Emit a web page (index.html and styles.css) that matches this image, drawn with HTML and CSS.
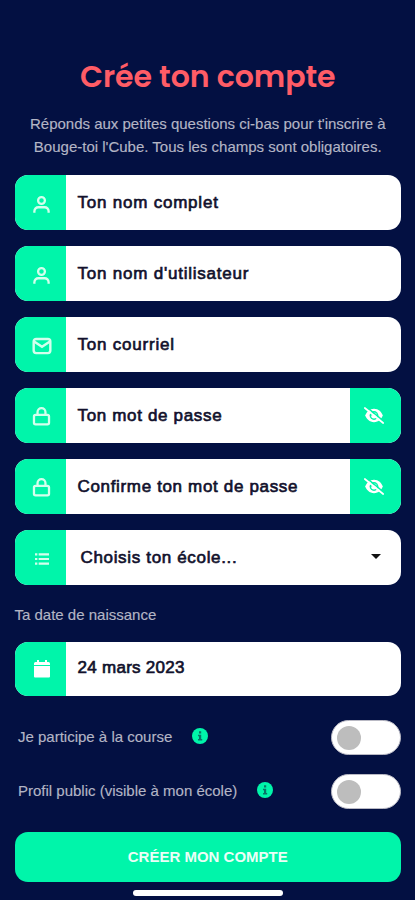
FILE: index.html
```html
<!DOCTYPE html>
<html lang="fr">
<head>
<meta charset="utf-8">
<meta name="viewport" content="width=device-width, initial-scale=1">
<title>Crée ton compte</title>
<link rel="stylesheet" href="styles.css">
</head>
<body>
<svg width="0" height="0" class="defs" aria-hidden="true">
  <symbol id="user" viewBox="0 0 24 24"><circle cx="12" cy="7" r="4.300" /><path d="M3 22.500v-2a5 5 0 0 1 5-5h8a5 5 0 0 1 5 5v2" /></symbol>
  <symbol id="mail" viewBox="0 0 24 24"><rect x="2" y="3.500" width="20" height="17" rx="3" /><path d="M2.500 6.500L12 13l9.500-6.500" /></symbol>
  <symbol id="lock" viewBox="0 0 24 24"><rect x="2.500" y="10.500" width="19" height="12" rx="2" /><path d="M7 10.500V7a5 5 0 0 1 10 0v3.500" /></symbol>
  <symbol id="list" viewBox="0 0 24 24"><path d="M7 5h15.500M7 12h15.500M7 19h15.500M1.500 5h3.500M1.500 12h3.500M1.500 19h3.500" /></symbol>
  <symbol id="eye" viewBox="0 0 24 20"><path class="solid" d="M12 2C6.500 2 3 6 1.500 10c1.500 4 5 8 10.500 8s9-4 10.500-8C21 6 17.500 2 12 2z" /><circle class="hole" cx="12" cy="10" r="5.300" /><path class="solid" d="M12 6.500a3.500 3.500 0 1 1-3.500 3.500c2 .3 3.500-1.300 3.500-3.500z" /><path class="gap" d="M2 -1l23 19" /><path class="slash" d="M1 1l22 18" /></symbol>
  <symbol id="calendar" viewBox="0 0 16 18"><path class="solid" d="M0 5V3.500Q0 2 1.500 2H3V0h2v2h6V0h2v2h1.500Q16 2 16 3.500V5zM0 6h16v10.500q0 1-1 1H1q-1 0-1-1z" /></symbol>
  <symbol id="info" viewBox="0 0 16 16"><circle class="disc" cx="8" cy="8" r="8" /><path class="ink" d="M7 3.300h2.200v2.200H7zM6 6.700h3.200v4.200h1v1.600H6v-1.600h1V8.200H6z" /></symbol>
</svg>
<main class="screen">
  <h1 class="title">Crée ton compte</h1>
  <p class="intro"><span class="line">Réponds aux petites questions ci-bas pour t'inscrire à</span><span class="line">Bouge-toi l'Cube. Tous les champs sont obligatoires.</span></p>
  <form class="form">
    <div class="field"><span class="addon"><svg class="icon"><use href="#user"/></svg></span><span class="value wide">Ton nom complet</span></div>
    <div class="field"><span class="addon"><svg class="icon"><use href="#user"/></svg></span><span class="value wide">Ton nom d'utilisateur</span></div>
    <div class="field"><span class="addon"><svg class="icon mail"><use href="#mail"/></svg></span><span class="value wide">Ton courriel</span></div>
    <div class="field"><span class="addon"><svg class="icon lock"><use href="#lock"/></svg></span><span class="value">Ton mot de passe</span><span class="addon end"><svg class="eye"><use href="#eye"/></svg></span></div>
    <div class="field"><span class="addon"><svg class="icon lock"><use href="#lock"/></svg></span><span class="value">Confirme ton mot de passe</span><span class="addon end"><svg class="eye"><use href="#eye"/></svg></span></div>
    <div class="field"><span class="addon"><svg class="icon list"><use href="#list"/></svg></span><span class="value select">Choisis ton école...<i class="caret"></i></span></div>
  </form>
  <div class="label">Ta date de naissance</div>
  <div class="field date"><span class="addon"><svg class="calendar"><use href="#calendar"/></svg></span><span class="value">24 mars 2023</span></div>
  <div class="option"><span class="option-text">Je participe à la course</span><svg class="info"><use href="#info"/></svg><span class="toggle"><i class="knob"></i></span></div>
  <div class="option"><span class="option-text">Profil public (visible à mon école)</span><svg class="info"><use href="#info"/></svg><span class="toggle"><i class="knob"></i></span></div>
  <button class="submit" type="button">CRÉER MON COMPTE</button>
  <div class="home-bar"></div>
</main>
</body>
</html>
```
FILE: styles.css
```css
* { box-sizing: border-box; }
body { margin: 0; background: #031042; font-family: "Liberation Sans", Arial, sans-serif; }
.defs { display: block; height: 0; }
.screen { height: 900px; padding: 53px 14px 0 14.5px; display: flex; flex-direction: column; overflow: hidden; }
.title { margin: 0; height: 48px; line-height: 48px; text-align: center; color: #ff5c66; font-family: Poppins, Inter, sans-serif; font-weight: 600; font-size: 30px; letter-spacing: -0.05px; white-space: nowrap; }
.intro { margin: 10.5px 0 16.5px; text-align: center; color: #b3b5c5; font-size: 15px; line-height: 23.500px; white-space: nowrap; -webkit-text-stroke: 0.15px currentColor; }
.line { display: block; }
.form { display: flex; flex-direction: column; gap: 16.500px; }
.field { display: flex; flex: none; height: 54.500px; border-radius: 13px; overflow: hidden; background: #fff; }
.addon { width: 51.500px; flex: none; display: flex; align-items: center; justify-content: center; background: #00f5aa; padding: 4px 0 0 3px; }
.addon.end { padding: 0 3px 0 0; }
.icon { width: 19px; height: 19px; fill: none; stroke: #d4ffed; stroke-width: 2.900; }
.mail { height: 20px; width: 20px; }
.lock { height: 20px; margin-top: -2px; }
.list { width: 18px; height: 16px; stroke-width: 3.300; }
.eye { width: 20px; height: 17px; }
.solid { fill: #fff; }
.hole { fill: #00f5aa; }
.gap { stroke: #00f5aa; stroke-width: 2; }
.slash { stroke: #fff; stroke-width: 2; stroke-linecap: round; }
.calendar { width: 16px; height: 18px; margin-top: -4px; }
.value { flex: 1; display: flex; align-items: center; padding: 1.5px 0 0 11.500px; color: #11112c; font-size: 17px; white-space: nowrap; -webkit-text-stroke: 0.65px currentColor; letter-spacing: 0.66px; }
.wide { letter-spacing: 0.78px; }
.select { padding: 1.5px 20px 0 14.500px; justify-content: space-between; }
.caret { border: 5px solid transparent; border-top-color: #111; border-bottom: 0; margin-bottom: 3px; }
.label { height: 57px; line-height: 59px; color: #b3b5c5; font-size: 15px; white-space: nowrap; -webkit-text-stroke: 0.15px currentColor; }
.date { margin-bottom: 23.5px; }
.date .value { padding-bottom: 3px; letter-spacing: 0.28px; }
.option { height: 35px; margin-bottom: 19px; display: flex; flex: none; align-items: center; padding-left: 3.500px; color: #b3b5c5; font-size: 15px; -webkit-text-stroke: 0.15px currentColor; }
.option-text { white-space: nowrap; padding-bottom: 2px; }
.info { width: 16px; height: 16px; margin: 0 0 3px 20px; }
.disc { fill: #00f5aa; }
.ink { fill: #087568; }
.toggle { width: 70px; height: 35px; margin-left: auto; border-radius: 18px; background: #fff; border: 1px solid #b9b9c4; padding: 5px; }
.knob { display: block; width: 24px; height: 24px; border-radius: 50%; background: #bdbdbd; }
.submit { flex: none; height: 50px; margin-top: 4px; padding: 0; border: 0; border-radius: 13px; background: #00f5aa; color: #e9fff7; font: bold 15px "Liberation Sans", Arial, sans-serif; }
.home-bar { flex: none; width: 150px; height: 6px; margin: 8.500px auto 0; border-radius: 3px; background: #fff; }
```
